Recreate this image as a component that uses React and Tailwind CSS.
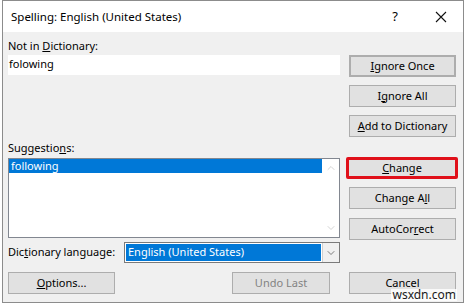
import { ChevronDown, ChevronUp } from "lucide-react";

const font = { fontFamily: '"Noto Sans", "Open Sans", sans-serif' };

function Btn({ children, className = "", disabled = false }) {
  return (
    <div
      className={`flex h-[22px] items-center justify-center whitespace-nowrap border border-[#adadad] bg-[#e1e1e1] text-[11px] ${
        disabled ? "text-[#838383]" : "text-black"
      } ${className}`}
    >
      {children}
    </div>
  );
}

export default function App() {
  return (
    <div className="h-[305px] w-[466px] bg-white" style={font}>
      <div className="relative ml-[2px] flex h-[303px] w-[462px] flex-col border border-[#8c8c8c] bg-[#f0f0f0]">
        {/* title bar */}
        <div className="flex h-[31px] items-center bg-white pl-[8px] text-[11.5px] text-black">
          <span className="pt-[1px]">Spelling: English (United States)</span>
          <span className="ml-auto mr-[37px] text-[13px]">?</span>
          <svg width="12" height="12" viewBox="0 0 12 12" className="mr-[16px]">
            <path d="M1 1L11 11M11 1L1 11" stroke="#111" strokeWidth="1.1" />
          </svg>
        </div>

        <div className="flex pl-[5px]">
          {/* left column */}
          <div className="flex w-[332px] flex-col text-[11px] text-black">
            <div className="mt-[6px] h-[16px] leading-[16px]">
              Not in <span className="underline">D</span>ictionary:
            </div>
            <div className="mt-[1px] h-[20px] bg-white pl-[1px] leading-[18px]">folowing</div>

            <div className="mt-[65px] h-[16px] leading-[16px]">
              Suggestio<span className="underline">n</span>s:
            </div>
            <div className="mt-[2px] flex h-[80px] border border-[#828790] bg-white">
              <div className="flex-1">
                <div className="h-[14px] bg-[#0078d7] pl-[2px] leading-[13px] text-white">following</div>
              </div>
              <div className="flex w-[17px] flex-col items-center justify-between py-[3px] text-[#c5c5c5]">
                <ChevronUp size={12} strokeWidth={1.5} />
                <ChevronDown size={12} strokeWidth={1.5} />
              </div>
            </div>

            <div className="mt-[4px] flex h-[21px] items-center">
              <span className="w-[116px] whitespace-nowrap">
                Dic<span className="underline">t</span>ionary language:
              </span>
              <div className="flex h-[21px] flex-1 border border-[#7a7a7a] bg-white">
                <div className="m-[1px] flex-1 whitespace-nowrap bg-[#0078d7] pl-[2px] leading-[16px] text-white outline-1 outline-dotted outline-[#ffffff80]">
                  English (United States)
                </div>
                <div className="flex w-[17px] items-center justify-center border-l border-[#d0d0d0] bg-[#f0f0f0] text-[#555]">
                  <ChevronDown size={12} strokeWidth={1.5} />
                </div>
              </div>
            </div>
          </div>

          {/* right column */}
          <div className="ml-[9px] flex w-[107px] flex-col">
            <Btn className="mt-[23px] border-2 border-[#0078d7]">
              <span className="underline">I</span>gnore Once
            </Btn>
            <Btn className="mt-[8px]">
              I<span className="underline">g</span>nore All
            </Btn>
            <Btn className="mt-[8px]">
              <span className="underline">A</span>dd to Dictionary
            </Btn>
            <Btn className="-ml-[3px] -mr-[2px] mt-[20px] rounded-[2px] border-[3px] border-[#e0101a]">
              <span className="underline">C</span>hange
            </Btn>
            <Btn className="mt-[8px] h-[21px]">
              Change A<span className="underline">l</span>l
            </Btn>
            <Btn className="mt-[9px] h-[21px]">
              AutoCor<span className="underline">r</span>ect
            </Btn>
          </div>
        </div>

        {/* bottom buttons */}
        <div className="mt-[9px] flex pl-[5px]">
          <Btn className="h-[21px] w-[107px]">
            <span className="underline">O</span>ptions...
          </Btn>
          <Btn className="ml-[117px] h-[21px] w-[98px]" disabled>
            Undo Last
          </Btn>
          <Btn className="ml-[19px] h-[21px] w-[107px]">Cancel</Btn>
        </div>

        <div className="absolute bottom-[1px] right-[6px] bg-white/80 px-[1px] text-[12px] leading-[12px] text-[#1a1a1a]">
          wsxdn.com
        </div>
      </div>
    </div>
  );
}
